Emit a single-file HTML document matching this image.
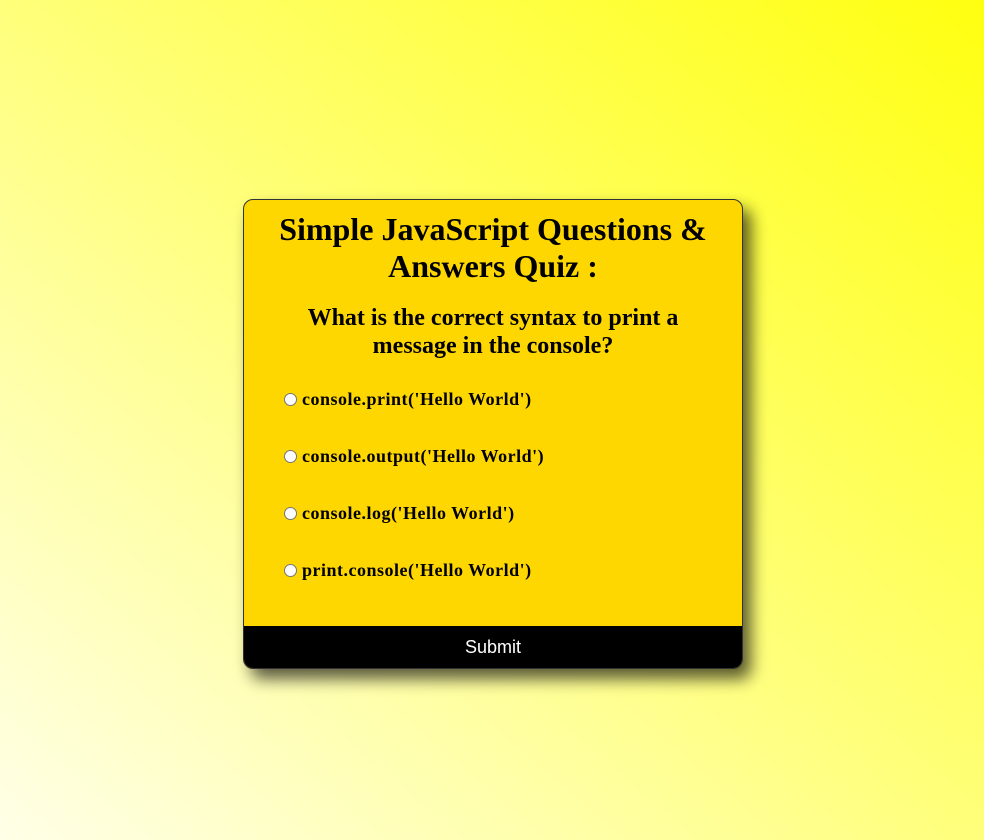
<!DOCTYPE html>
<html><head><style>
html,body{margin:0;width:984px;height:840px;overflow:hidden}
body{background:linear-gradient(to top right,#ffffe8 0%,#ffff70 55%,#ffff10 100%);font-family:"Liberation Serif",serif}
.card{position:absolute;left:243px;top:199px;width:498px;height:468px;background:#ffd700;border:1px solid #333;border-radius:10px;box-shadow:8px 10px 16px rgba(0,0,0,.65);overflow:hidden}
h1{position:absolute;left:0;width:100%;top:11px;margin:0;text-align:center;font-size:32px;line-height:37px;font-weight:bold}
h2{position:absolute;left:40px;width:418px;top:104px;margin:0;text-align:center;font-size:24px;line-height:28px;font-weight:bold}
.opt{position:absolute;left:40px;font-size:18px;font-weight:bold;display:flex;align-items:center;letter-spacing:0.5px}
.r{width:11px;height:11px;border:1px solid #767676;border-radius:50%;background:#fff;margin-right:5px}
.btn{position:absolute;left:0;bottom:0;width:100%;height:42px;background:#000;color:#fff;font-family:"Liberation Sans",sans-serif;font-size:18px;text-align:center;line-height:42px}
</style></head><body>
<div class="card">
<h1>Simple JavaScript Questions &amp;<br>Answers Quiz :</h1>
<h2>What is the correct syntax to print a message in the console?</h2>
<div class="opt" style="top:189px"><span class="r"></span>console.print('Hello World')</div>
<div class="opt" style="top:246px"><span class="r"></span>console.output('Hello World')</div>
<div class="opt" style="top:303px"><span class="r"></span>console.log('Hello World')</div>
<div class="opt" style="top:360px"><span class="r"></span>print.console('Hello World')</div>
<div class="btn">Submit</div>
</div>
</body></html>
